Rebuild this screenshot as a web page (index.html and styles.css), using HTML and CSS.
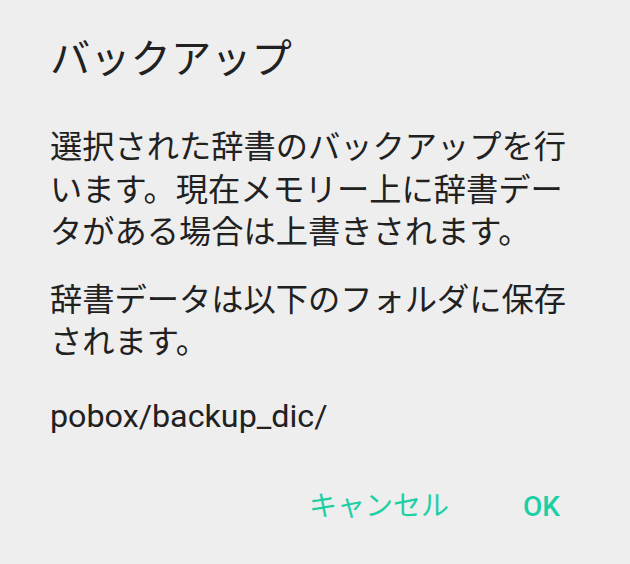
FILE: index.html
```html
<!DOCTYPE html>
<html lang="ja">
<head>
<meta charset="utf-8">
<link rel="stylesheet" href="styles.css">
</head>
<body>
<div class="dialog">
  <h1 class="title">バックアップ</h1>
  <div class="message">
    <p class="para">選択された辞書のバックアップを行います。現在メモリー上に辞書データがある場合は上書きされます。</p>
    <p class="para second">辞書データは以下のフォルダに保存されます。</p>
    <p class="para path">pobox/backup_dic/</p>
  </div>
  <div class="actions">
    <span class="btn">キャンセル</span>
    <span class="btn ok">OK</span>
  </div>
</div>
</body>
</html>
```
FILE: styles.css
```css
html, body {
  margin: 0;
  padding: 0;
  background: #eeeeee;
}
body {
  width: 630px;
  height: 564px;
  overflow: hidden;
  font-family: "Roboto", "Noto Sans CJK JP", sans-serif;
  color: #212121;
}
.dialog {
  padding: 32px 46px 0 50px;
}
.title {
  margin: 0;
  font-size: 40.3px;
  font-weight: 400;
  line-height: 56px;
}
.message {
  margin-top: 38px;
  font-size: 32.25px;
  line-height: 42.5px;
}
.para {
  margin: 0 0 25px 0;
}
.second {
  margin-bottom: 31px;
}
.path {
  margin-bottom: 0;
}
.actions {
  display: flex;
  justify-content: flex-end;
  margin-top: 50px;
  padding-right: 24px;
  gap: 74px;
}
.btn {
  font-size: 28px;
  line-height: 40px;
  color: #1dcfa4;
}
.ok {
  font-weight: 500;
}
```
